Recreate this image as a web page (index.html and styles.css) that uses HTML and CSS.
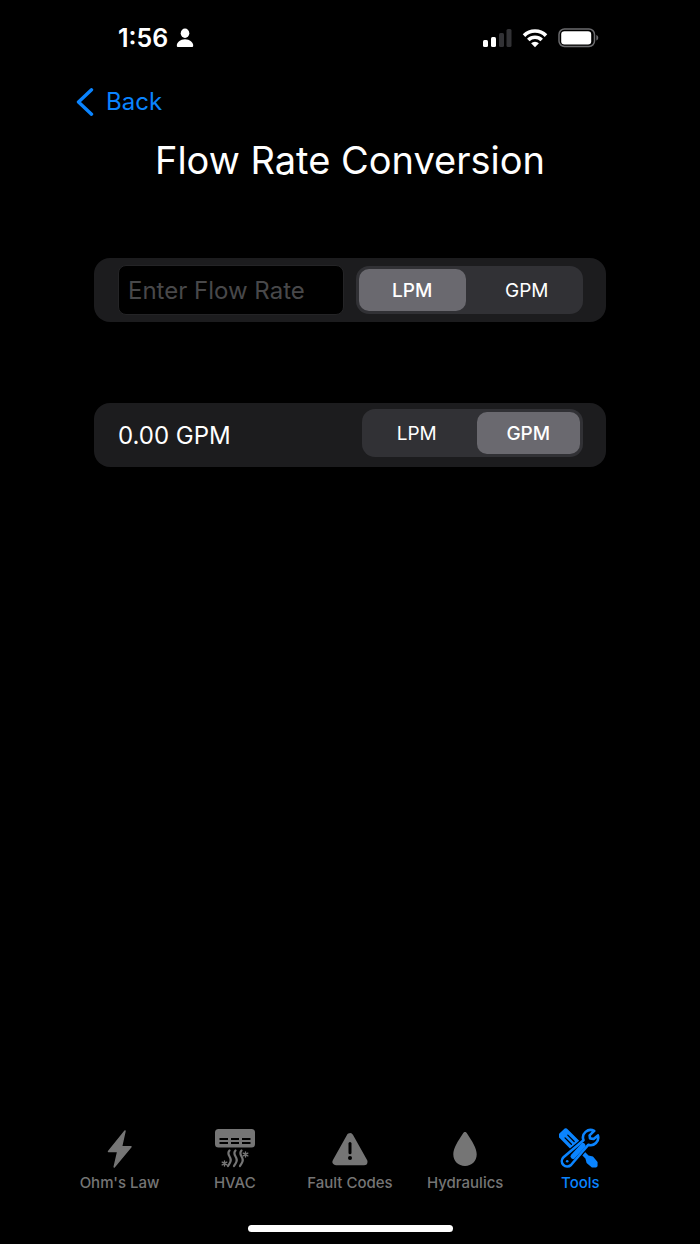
FILE: index.html
```html
<!DOCTYPE html>
<html lang="en">
<head>
<meta charset="utf-8">
<meta name="viewport" content="width=device-width, initial-scale=1">
<title>Flow Rate Conversion</title>
<link rel="stylesheet" href="styles.css">
</head>
<body>
<div class="screen">
  <header class="status">
    <div class="status-left">
      <span class="time">1:56</span>
      <svg class="person" viewBox="0 0 18 20" width="18" height="20" fill="currentColor" aria-hidden="true"><ellipse cx="9" cy="5.300" rx="4.300" ry="4.700"/><path d="M2.500 19C1.300 19 .8 18.300 .8 17.400.8 14.500 4.200 11.300 9 11.300s8.200 3.200 8.200 6.100c0 .9-.5 1.600-1.700 1.600z"/></svg>
    </div>
    <div class="status-right">
      <svg viewBox="0 0 30 20" width="30" height="20" fill="currentColor" aria-hidden="true"><rect x="1" y="12" width="5" height="7" rx="1.500"/><rect x="9" y="9" width="5" height="10" rx="1.500"/><g fill="#323235"><rect x="17" y="5" width="5" height="14" rx="1.500"/><rect x="24.500" y="1" width="5" height="18" rx="1.500"/></g></svg>
      <svg viewBox="0 0 26 20" width="26" height="20" fill="none" stroke="currentColor" stroke-width="3.600" aria-hidden="true"><path d="M2 7.600a15.600 15.600 0 0 1 22 0"/><path d="M6.300 12a9.500 9.500 0 0 1 13.400 0"/><path d="M13 19.300l-3.900-4a5.500 5.500 0 0 1 7.800 0z" fill="currentColor" stroke="none"/></svg>
      <svg viewBox="0 0 42 20" width="42" height="20" aria-hidden="true"><rect x="1" y="1" width="35.500" height="17.500" rx="5.500" fill="none" stroke="#6b6b6e" stroke-width="1.500"/><rect x="3.200" y="3.200" width="30" height="13.200" rx="3.200" fill="#fff"/><path d="M38.300 7c2.600.8 2.600 4.700 0 5.500z" fill="#6b6b6e"/></svg>
    </div>
  </header>
  <nav class="nav" aria-label="Navigation">
    <a class="back" href="#tools"><svg viewBox="0 0 18 28" width="18" height="28" fill="none" stroke="currentColor" stroke-width="3.400" stroke-linecap="round" stroke-linejoin="round" aria-hidden="true"><path d="M15.500 1.800 2.500 14l13 12.200"/></svg>Back</a>
  </nav>
  <main class="content">
    <h1 class="title">Flow Rate Conversion</h1>
    <form class="card entry">
      <input class="field" type="text" inputmode="decimal" placeholder="Enter Flow Rate" aria-label="Enter Flow Rate">
      <fieldset class="segments" aria-label="Input unit">
        <label class="segment"><input type="radio" name="from" checked><span>LPM</span></label>
        <label class="segment"><input type="radio" name="from"><span>GPM</span></label>
      </fieldset>
    </form>
    <form class="card answer">
      <output class="result">0.00 GPM</output>
      <fieldset class="segments" aria-label="Output unit">
        <label class="segment"><input type="radio" name="to"><span>LPM</span></label>
        <label class="segment"><input type="radio" name="to" checked><span>GPM</span></label>
      </fieldset>
    </form>
  </main>
  <nav class="tabs" aria-label="Sections">
    <a class="tab" href="#ohm"><svg viewBox="0 0 42 42" width="42" height="42" fill="currentColor" stroke="currentColor" stroke-linejoin="round" aria-hidden="true"><path stroke-width="1.500" d="M26 3 9.500 23.500h9.300L15.200 39 32 18.800h-9.500z"/></svg>Ohm's Law</a>
    <a class="tab" href="#hvac"><svg viewBox="0 0 42 42" width="42" height="42" aria-hidden="true"><rect x="1" y="1" width="40" height="18.500" rx="3.500" fill="currentColor"/><path d="M5.500 11h8.500m3 0h8m3 0h8.500M5.500 15h8.500m3 0h8m3 0h8.500" stroke="#000" stroke-width="2"/><g fill="none" stroke="currentColor" stroke-linecap="round"><path stroke-width="2.200" d="M15.500 22.500c-4 4 3 7 1 11-.4 1.500-1.500 3-2.500 4.500M21.500 22.500c-4 4 3 7 1 11-.4 1.500-1.500 3-2.500 4.500M27.500 22.500c-4 4 3 7 1 11-.4 1.500-1.500 3-2.500 4.500"/><path stroke-width="1.400" d="M31.500 24v5m-2.300-3.800 4.600 2.600m0-2.600-4.600 2.600M10.500 33v5m-2.300-3.800 4.600 2.600m0-2.600-4.600 2.600"/></g></svg>HVAC</a>
    <a class="tab" href="#faults"><svg viewBox="0 0 42 42" width="42" height="42" aria-hidden="true"><path d="M21 8.600 7 33.700h28z" fill="currentColor" stroke="currentColor" stroke-width="7" stroke-linejoin="round"/><path d="M21 15.500v9.300" stroke="#000" stroke-width="3" stroke-linecap="round"/><circle cx="21" cy="30" r="2" fill="#000"/></svg>Fault Codes</a>
    <a class="tab" href="#hydraulics"><svg viewBox="0 0 42 42" width="42" height="42" fill="currentColor" aria-hidden="true"><path d="M21 4c-1 0-1.600.7-2.200 1.700C14 13 9.300 20 9.300 26.200c0 7 5 11.700 11.700 11.700s11.700-4.700 11.700-11.700c0-6.200-4.700-13.200-9.500-20.500C22.600 4.700 22 4 21 4z"/></svg>Hydraulics</a>
    <a class="tab active" href="#tools" aria-current="page"><svg viewBox="0 0 42 42" width="42" height="42" fill="none" stroke-linecap="round" stroke-linejoin="round" aria-hidden="true">
      <g transform="translate(2.500 3.500) rotate(45)"><rect x="0" y="-6" width="22" height="12" rx="3" fill="currentColor"/><path d="M7 -1.900h9M7 2h9" stroke="#000" stroke-width="1.300"/><path d="M22-2.200h14l4-2.300 7 .5 3 3v2l-3 3-7 .5-4-2.300H22z" fill="currentColor"/></g>
      <path d="M10 33 28 15" stroke="#000" stroke-width="8"/>
      <path d="M35.200 2.900A7.600 7.600 0 0 0 24.500 12.300L4.500 29.200A5.300 5.300 0 1 0 12 37L29.200 16.800A7.600 7.600 0 0 0 38.900 7.400L34.600 11l-3.600-.6-.4-3z" fill="#000" stroke="#000" stroke-width="5"/>
      <path d="M35.200 2.900A7.600 7.600 0 0 0 24.500 12.300L4.500 29.200A5.300 5.300 0 1 0 12 37L29.200 16.800A7.600 7.600 0 0 0 38.900 7.400L34.600 11l-3.600-.6-.4-3z" fill="#000" stroke="currentColor" stroke-width="2.600"/>
      <path d="M14 28.500 24 17.500" stroke="currentColor" stroke-width="5"/>
      <circle cx="8.200" cy="33.300" r="1.300" fill="currentColor"/>
    </svg>Tools</a>
  </nav>
  <div class="home"></div>
</div>
</body>
</html>
```
FILE: styles.css
```css
* { box-sizing: border-box; }

body {
  margin: 0;
  background: #000;
  color: #fff;
  font-family: Inter, "Liberation Sans", sans-serif;
}

.screen {
  display: flex;
  flex-direction: column;
  max-width: 576px;
  min-height: 100vh;
  margin: 0 auto;
}

svg { display: block; flex: none; }

.status {
  display: flex;
  align-items: center;
  justify-content: space-between;
  padding: 22px 38px 0 56px;
}

.status-left { display: flex; align-items: center; gap: 8px; }
.status-right { display: flex; align-items: center; gap: 10px; }

.time {
  font-size: 25px;
  font-weight: 600;
  line-height: 32px;
}

.nav { padding: 32px 14px 0; }

.back {
  display: inline-flex;
  align-items: center;
  gap: 12px;
  color: #0a84ff;
  font-size: 24px;
  line-height: 32px;
  text-decoration: none;
}

.content {
  display: flex;
  flex: 1;
  flex-direction: column;
  padding: 16px 32px;
}

.title {
  margin: 0 0 74px;
  font-size: 38px;
  font-weight: 400;
  line-height: 48px;
  text-align: center;
}

.card {
  display: flex;
  justify-content: space-between;
  gap: 12px;
  min-height: 64px;
  padding: 0 23px 0 24px;
  border-radius: 16px;
  background: #1c1c1e;
}

.entry { align-items: center; }

.answer {
  align-items: flex-start;
  margin-top: 81px;
  padding-top: 6px;
}

.field {
  flex: 1;
  min-width: 0;
  height: 50px;
  padding: 0 9px;
  border: 1px solid #242426;
  border-radius: 8px;
  background: #000;
  color: #fff;
  font: inherit;
  font-size: 24px;
}

.field::placeholder { color: #48484a; opacity: 1; }

.result {
  font-size: 24px;
  line-height: 54px;
}

.segments {
  display: flex;
  width: 227px;
  height: 48px;
  margin: 0;
  padding: 3px;
  border: 0;
  border-radius: 13px;
  background: #313135;
  gap: 8px;
}

.answer .segments { width: 221px; }

.segment { display: flex; flex: 1; }

.segment input {
  position: absolute;
  opacity: 0;
}

.segment span {
  display: flex;
  flex: 1;
  align-items: center;
  justify-content: center;
  border-radius: 10px;
  font-size: 19px;
}

.segment input:checked + span {
  background: #6a696f;
  font-weight: 500;
}

.tabs { display: grid; grid-template-columns: repeat(5, 1fr); }

.tab {
  display: flex;
  flex-direction: column;
  align-items: center;
  gap: 3px;
  color: #757575;
  font-size: 15px;
  font-weight: 500;
  line-height: 20px;
  text-decoration: none;
}

.active { color: #0a84ff; }

.home {
  width: 205px;
  height: 7px;
  margin: 32px auto 12px;
  border-radius: 4px;
  background: #fff;
}
```
